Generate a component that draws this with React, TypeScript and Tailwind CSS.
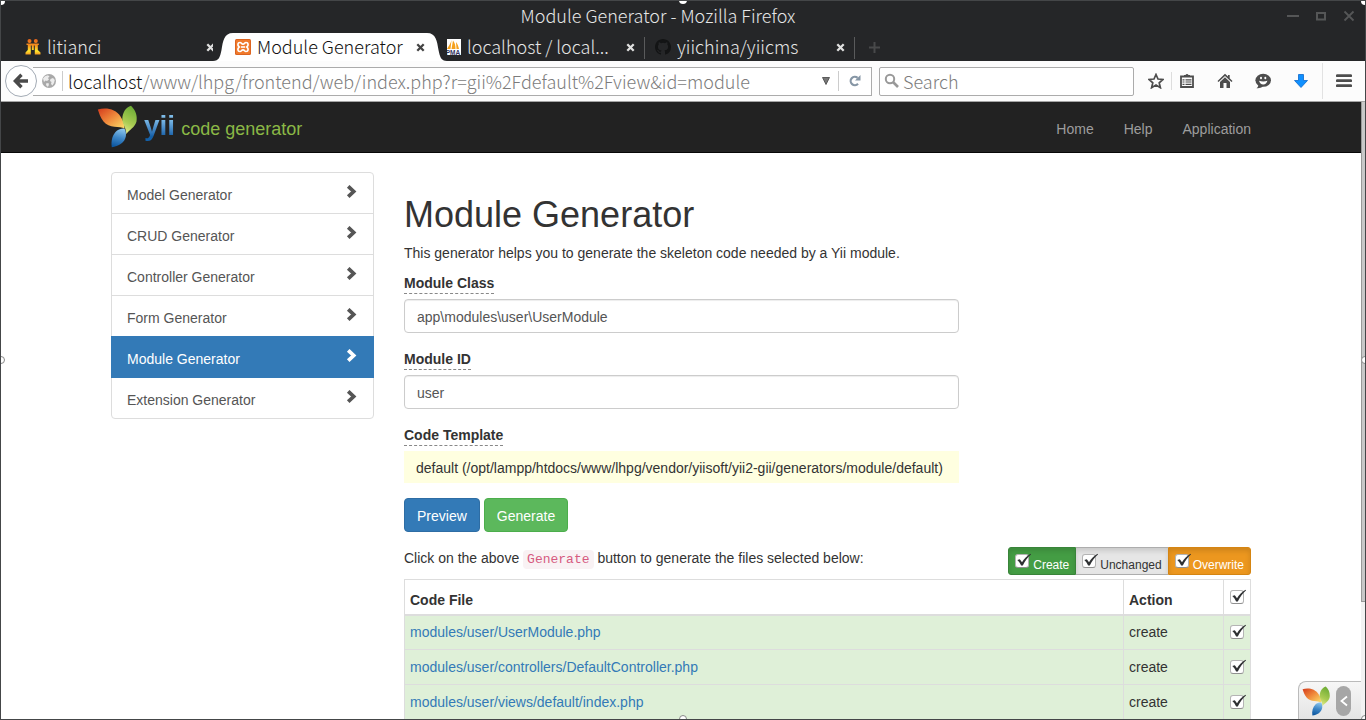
import type { ReactNode } from 'react';

const chromeFont = "font-['Noto_Sans_CJK_SC','Noto_Sans',sans-serif]";
const pageFont = "font-['Liberation_Sans',Arial,sans-serif]";

function Leaves({ className, id }: { className: string; id: string }) {
  return (
    <svg className={className} viewBox="0 0 40 43" aria-hidden="true">
      <defs>
        <linearGradient id={id + 'o'} x1="0" y1="0" x2="1" y2="1">
          <stop offset="0" stopColor="#d43a1c" />
          <stop offset="0.5" stopColor="#f08a3c" />
          <stop offset="1" stopColor="#fbe06a" />
        </linearGradient>
        <linearGradient id={id + 'g'} x1="0.6" y1="0" x2="0.3" y2="1">
          <stop offset="0" stopColor="#6cab35" />
          <stop offset="0.6" stopColor="#a9cb52" />
          <stop offset="1" stopColor="#e3ec8c" />
        </linearGradient>
        <linearGradient id={id + 'b'} x1="0.6" y1="0" x2="0.4" y2="1">
          <stop offset="0" stopColor="#8cc6ee" />
          <stop offset="0.5" stopColor="#3d86c6" />
          <stop offset="1" stopColor="#0d57a0" />
        </linearGradient>
      </defs>
      <path fill={`url(#${id}o)`} d="M.8 4.500C9 2 19 4 23.500 11.500C26.500 16 27.500 19 27.500 23.500C23 21 12 23.500 6.500 16.500C3 12 2.200 8 .8 4.500Z" />
      <path fill={`url(#${id}g)`} d="M34 .8C38.500 5 40.500 10.500 39.500 16.500C38 22.500 32.500 24.500 29.300 29C29.300 23 25.500 19.500 25.300 14C25.600 7 29 2.500 34 .8Z" />
      <path fill={`url(#${id}b)`} d="M27.300 23.500C28.800 25.500 29.200 28 28.900 31C28 37.500 21.500 41.500 14.800 42.200C13.800 36 15.500 29.500 19.500 26C21.500 24.200 24.500 23.300 27.300 23.500Z" />
    </svg>
  );
}

function CloseMark({ className }: { className: string }) {
  return (
    <svg className={className} viewBox="0 0 9 9" aria-hidden="true">
      <path d="M1.300 1.300L7.700 7.700M7.700 1.300L1.300 7.700" stroke="currentColor" strokeWidth="2.300" />
    </svg>
  );
}

function Tab({ icon, title, active, divider }: { icon: ReactNode; title: string; active?: boolean; divider?: boolean }) {
  return (
    <div className={active ? 'relative z-10 flex h-7 w-[210px] items-center bg-white text-[#111]' : 'relative flex h-7 w-[210px] items-center text-[#e6e6e6]'}>
      {active && (
        <>
          <svg className="absolute -left-3 top-0 h-7 w-6" viewBox="0 0 24 28" aria-hidden="true">
            <path d="M0 0H24V28H0Z" fill="#252628" />
            <path d="M0 28C6 28 7 24 8.500 17C10 8 11 0 20 0H24V28Z" fill="#fff" />
          </svg>
          <svg className="absolute -right-3 top-0 h-7 w-6" viewBox="0 0 24 28" aria-hidden="true">
            <path d="M0 0H24V28H0Z" fill="#252628" />
            <path d="M24 28C18 28 17 24 15.500 17C14 8 13 0 4 0H0V28Z" fill="#fff" />
          </svg>
        </>
      )}
      <div className="relative flex w-full items-center px-2.5">
        {icon}
        <span className="ml-1.5 flex-1 whitespace-nowrap pb-0.5 text-[18px] leading-[26px]">{title}</span>
        <button type="button" aria-label={'Close ' + title} className="shrink-0">
          <CloseMark className={active ? 'h-[9px] w-[9px] text-[#444]' : 'h-[9px] w-[9px] text-[#e0e0e0]'} />
        </button>
      </div>
      {divider && <span className="absolute right-0 top-1 h-[22px] w-px bg-[#5a5b5c]" />}
    </div>
  );
}

function Check({ label, id }: { label: string; id: string }) {
  return (
    <span className="relative inline-block h-3.5 w-3.5 align-top">
      <input
        id={id}
        type="checkbox"
        defaultChecked
        aria-label={label}
        className="peer block h-3.5 w-3.5 appearance-none rounded-[3px] border border-[#b4b4b4] border-b-[#909090] bg-white"
      />
      <svg className="pointer-events-none absolute -top-px left-0 hidden h-4 w-4 peer-checked:block" viewBox="0 0 16 16" aria-hidden="true">
        <path d="M2.300 7L4.800 6.200L7 9.200C9 6 12 2.800 15.500 .8L16 1.600C12.700 4.500 9.700 8.500 7.800 12.500H6.100C5.200 10.500 4 8.500 2.300 7Z" fill="#2e3032" />
      </svg>
    </span>
  );
}

const generators = ['Model Generator', 'CRUD Generator', 'Controller Generator', 'Form Generator', 'Module Generator', 'Extension Generator'];
const files = ['modules/user/UserModule.php', 'modules/user/controllers/DefaultController.php', 'modules/user/views/default/index.php'];

function Field({ id, label, value }: { id: string; label: string; value: string }) {
  return (
    <div className="mb-4">
      <label htmlFor={id} className="mb-[5px] inline-block border-b border-dashed border-[#888] align-top text-[14px] font-bold leading-5">
        {label}
      </label>
      <input
        id={id}
        type="text"
        defaultValue={value}
        className="block h-[34px] w-full rounded border border-[#ccc] bg-white px-3 pt-2 pb-1.5 text-[14px] leading-5 text-[#555] shadow-[inset_0_1px_1px_rgba(0,0,0,0.075)]"
      />
    </div>
  );
}

function BrowserChrome() {
  return (
    <header className={`shrink-0 bg-[#252628] font-light ${chromeFont}`}>
      <div className="relative flex h-8 items-start justify-center pt-0.5 pr-[50px]">
        <div className="text-[18px] leading-6 text-[#e6e6e6]">Module Generator - Mozilla Firefox</div>
        <div className="absolute right-2.5 top-[9px] flex items-center gap-4 text-[#555657]">
          <button type="button" aria-label="Minimize">
            <svg className="block h-3 w-3" viewBox="0 0 12 12"><path d="M0 6H12" stroke="currentColor" strokeWidth="2" /></svg>
          </button>
          <button type="button" aria-label="Maximize">
            <svg className="block h-3 w-3" viewBox="0 0 12 12"><path d="M2 3H10V9.500H2Z" fill="none" stroke="currentColor" strokeWidth="2" /></svg>
          </button>
          <button type="button" aria-label="Close">
            <svg className="block h-3 w-3" viewBox="0 0 12 12"><path d="M1.500 1.500L10.500 10.500M10.500 1.500L1.500 10.500" stroke="currentColor" strokeWidth="1.800" /></svg>
          </button>
        </div>
      </div>
      <div className="flex h-7 pl-3.5">
        <Tab
          title="litianci"
          icon={
            <svg className="h-4 w-4 shrink-0" viewBox="0 0 16 16" aria-hidden="true">
              <defs>
                <linearGradient id="people" x1="0" y1="0" x2="0" y2="16" gradientUnits="userSpaceOnUse">
                  <stop offset="0" stopColor="#e8641b" />
                  <stop offset="0.4" stopColor="#f5901e" />
                  <stop offset="0.75" stopColor="#ffe92e" />
                  <stop offset="1" stopColor="#f08a1e" />
                </linearGradient>
              </defs>
              <g fill="url(#people)">
                <circle cx="4.500" cy="2" r="2" />
                <circle cx="10.800" cy="2" r="2" />
                <path d="M1.500 4.500H13.800V6H12.800V11L15.500 13.500V15.500H9.800V6.500H8.800V11H6.800V6.500H5.800V15.500H.5V13.500L2.800 11V6H1.500Z" />
              </g>
            </svg>
          }
        />
        <Tab
          active
          title="Module Generator"
          icon={
            <svg className="h-4 w-4 shrink-0" viewBox="0 0 16 16" aria-hidden="true">
              <rect width="16" height="16" rx="1.500" fill="#dd6420" />
              <rect x="1" y="1" width="14" height="14" rx="1" fill="#f07a2c" />
              <path d="M5 3.500C2.500 3.500 2.200 6.500 4.200 8C2.200 9.500 2.500 12.500 5 12.500C6.500 12.500 6.300 10.800 8 10.800S9.500 12.500 11 12.500C13.500 12.500 13.800 9.500 11.800 8C13.800 6.500 13.500 3.500 11 3.500C9.500 3.500 9.700 5.200 8 5.200S6.500 3.500 5 3.500Z" fill="none" stroke="#fff" strokeWidth="1.700" />
              <path d="M6 8H10" stroke="#fff" strokeWidth="1.600" />
            </svg>
          }
        />
        <Tab
          divider
          title="localhost / local..."
          icon={
            <svg className="h-4 w-4 shrink-0" viewBox="0 0 16 16" aria-hidden="true">
              <rect width="16" height="16" fill="#fff" />
              <path d="M6.500 1L5.500 10H2C3.500 7.500 5.500 5 6.500 1ZM8 1.500C10 4 10.500 7 10.500 10H6.500ZM11 3C12.500 5 13.500 7.500 14 10H11.500Z" fill="#f6a11c" />
              <text x="8" y="15.600" textAnchor="middle" fontSize="6.500" fontWeight="bold" fill="#33335f" fontFamily="Liberation Sans, sans-serif">PMA</text>
            </svg>
          }
        />
        <Tab
          divider
          title="yiichina/yiicms"
          icon={
            <svg className="h-4 w-4 shrink-0" viewBox="0 0 16 16" aria-hidden="true">
              <path fill="#131415" d="M8 0C3.580 0 0 3.580 0 8c0 3.540 2.290 6.530 5.470 7.590.4.070.55-.17.55-.38 0-.19-.01-.82-.01-1.490-2.010.37-2.530-.49-2.690-.94-.09-.23-.48-.94-.82-1.130-.28-.15-.68-.52-.01-.53.63-.01 1.080.58 1.230.82.72 1.210 1.870.87 2.330.66.07-.52.28-.87.51-1.070-1.780-.2-3.640-.89-3.640-3.950 0-.87.31-1.590.82-2.150-.08-.2-.36-1.020.08-2.120 0 0 .67-.21 2.200.82a7.600 7.600 0 0 1 4 0c1.530-1.040 2.200-.82 2.200-.82.44 1.100.16 1.920.08 2.120.51.56.82 1.270.82 2.150 0 3.070-1.870 3.750-3.650 3.950.29.25.54.73.54 1.480 0 1.070-.01 1.930-.01 2.200 0 .21.15.46.55.38A8 8 0 0 0 16 8c0-4.420-3.580-8-8-8Z" />
            </svg>
          }
        />
        <button type="button" aria-label="New tab" className="ml-3.5 text-[#48494a]">
          <svg className="block h-[11px] w-[11px]" viewBox="0 0 11 11"><path d="M5.500 0V11M0 5.500H11" stroke="currentColor" strokeWidth="2" /></svg>
        </button>
      </div>
      <div className="flex h-[41px] items-center border-b border-[#a5a5a5] bg-[#fcfcfc] pl-1 pr-[13px]">
        <button type="button" aria-label="Back" className="relative z-10 flex h-8 w-8 shrink-0 items-center justify-center rounded-full border border-[#a3abb5] bg-white">
          <svg className="h-4 w-4" viewBox="0 0 16 16"><path d="M8.500 1.800L2.300 8L8.500 14.200M3 8H15" fill="none" stroke="#4a4a4a" strokeWidth="3.400" /></svg>
        </button>
        <div className="-ml-1 flex h-[29px] min-w-0 flex-1 items-center border border-l-0 border-[#ababab] bg-white pl-[9px]">
          <svg className="h-3.5 w-3.5 shrink-0" viewBox="0 0 14 14" aria-hidden="true">
            <circle cx="7" cy="7" r="7" fill="#a9a9a9" />
            <path d="M1 4.500L3 2.200L6 1.200L7.500 2.500L6 4L7 5.500L5 7L3.500 6.500L2 8ZM8.500 5L11 4L12.800 6L12 9L10.500 11.500L9 10L9.500 8L8 7ZM4.500 9L7 9.500L6.500 12L5.500 12.800L4 11Z" fill="#ececec" />
          </svg>
          <span className="ml-1.5 h-5 w-px shrink-0 bg-[#ccc]" />
          <div className="ml-[5px] min-w-0 flex-1 whitespace-nowrap text-[18px] leading-6 text-[#7c7c7c]">
            <span className="text-[#111]">localhost</span>/www/lhpg/frontend/web/index.php?r=gii%2Fdefault%2Fview&amp;id=module
          </div>
          <button type="button" aria-label="Show history" className="shrink-0">
            <svg className="block h-2 w-2" viewBox="0 0 8 8"><path d="M.5 .5H7.500L4 7.500Z" fill="#777" stroke="#444" strokeWidth="0.800" /></svg>
          </button>
          <span className="ml-2 h-5 w-px shrink-0 bg-[#ccc]" />
          <button type="button" aria-label="Reload" className="mx-2.5 shrink-0">
            <svg className="block h-3 w-3" viewBox="0 0 12 12">
              <path d="M9 8.800A4.200 4.200 0 1 1 8.600 2.800" fill="none" stroke="#8696a5" strokeWidth="2.200" />
              <path d="M11.500 0V5.500H6Z" fill="#8696a5" />
            </svg>
          </button>
        </div>
        <label className="ml-[7px] flex h-[29px] w-[255px] items-center rounded-xs border border-[#ababab] bg-white pl-1">
          <svg className="h-4 w-4 shrink-0" viewBox="0 0 16 16" aria-hidden="true">
            <circle cx="6" cy="6" r="4.200" fill="none" stroke="#999" strokeWidth="2" />
            <path d="M9 9L14 14" stroke="#999" strokeWidth="2.600" />
          </svg>
          <input type="search" aria-label="Search" placeholder="Search" className="ml-[3px] w-full min-w-0 bg-transparent text-[18px] leading-6 placeholder:text-[#7c7c7c]" />
        </label>
        <div className="flex shrink-0 items-center text-[#4d4d4d]">
          <button type="button" aria-label="Bookmark this page" className="ml-3.5">
            <svg className="block h-4 w-4" viewBox="0 0 16 16"><path d="M8 1.500L10 6L15 6.500L11.200 9.800L12.400 14.700L8 12.100L3.600 14.700L4.800 9.800L1 6.500L6 6Z" fill="none" stroke="currentColor" strokeWidth="1.700" /></svg>
          </button>
          <span className="ml-[7px] h-[18px] w-px bg-[#ddd]" />
          <button type="button" aria-label="Bookmarks" className="ml-[7px]">
            <svg className="block h-4 w-4" viewBox="0 0 16 16">
              <path d="M2 3.500H14V14H2Z" fill="none" stroke="currentColor" strokeWidth="1.800" />
              <path d="M5 4V2H6.500A1.700 1.700 0 0 1 9.500 2H11V4Z" fill="currentColor" />
              <path d="M3.500 6.800H5.500M6.500 6.800H12.500M3.500 9H5.500M6.500 9H12.500M3.500 11.300H5.500M6.500 11.300H12.500" stroke="currentColor" strokeWidth="1.200" />
            </svg>
          </button>
          <button type="button" aria-label="Home page" className="ml-[22px]">
            <svg className="block h-4 w-4" viewBox="0 0 16 16">
              <path d="M8 .8L.5 8L1.500 9L8 3L14.500 9L15.500 8L12.700 5.200V2H11V3.600Z" fill="currentColor" />
              <path d="M8 4.300L3 9V15H6.500V10H9.500V15H13V9Z" fill="currentColor" />
            </svg>
          </button>
          <button type="button" aria-label="Start a conversation" className="ml-[22px]">
            <svg className="block h-4 w-4" viewBox="0 0 16 16">
              <ellipse cx="8.200" cy="7.300" rx="7.800" ry="6.500" fill="currentColor" />
              <path d="M1.500 15.200C3.500 14 3.500 12 3 11L8 13.300C6 15 4 15.500 1.500 15.200Z" fill="currentColor" />
              <path d="M4 7.800Q8.200 9.300 12.400 7.800Q11.500 11.500 8.200 11.500Q5 11.500 4 7.800Z" fill="#fff" />
              <ellipse cx="6" cy="5" rx="1" ry="1.300" fill="#fff" />
              <ellipse cx="10.300" cy="5" rx="1" ry="1.300" fill="#fff" />
            </svg>
          </button>
          <button type="button" aria-label="Downloads" className="ml-[22px]">
            <svg className="block h-4 w-4" viewBox="0 0 16 16"><path d="M5.500 1.500H10.500V7.500H14.500L8 14.500L1.500 7.500H5.500Z" fill="#0f90ff" stroke="#0b68cc" strokeWidth="0.800" /></svg>
          </button>
          <span className="ml-[13px] h-9 w-px bg-[#e2e2e2]" />
          <button type="button" aria-label="Open menu" className="ml-[13px]">
            <svg className="block h-4 w-4" viewBox="0 0 16 16"><path d="M1.200 2.700H14.800M1.200 7.700H14.800M1.200 12.700H14.800" stroke="currentColor" strokeWidth="2.700" strokeLinecap="round" /></svg>
          </button>
        </div>
      </div>
    </header>
  );
}

export default function App() {
  return (
    <div className="relative flex h-screen flex-col overflow-hidden border border-[#444648] bg-white">
      <BrowserChrome />
      <div className={`flex min-h-0 flex-1 ${pageFont} text-[14px] leading-5 text-[#333]`}>
        <div className="relative min-w-0 flex-1 overflow-hidden">
          <nav className="border-b border-[#080808] bg-[#222]">
            <div className="mx-auto flex h-[50px] max-w-[1170px] items-center justify-between pr-[15px]">
              <a href="#yii" className="flex h-full items-center">
                <Leaves id="brand" className="mb-0.5 h-[43px] w-[42px]" />
                <span className="ml-1.5 bg-linear-to-b from-[#7dbbe8] from-30% to-[#1360a8] to-75% bg-clip-text pb-0.5 text-[28px] font-bold leading-9 text-transparent">yii</span>
                <span className="ml-1.5 pt-1 text-[18px] leading-6 text-[#8bb846]">code generator</span>
              </a>
              <div className="flex gap-[30px] pt-1 text-[#9d9d9d]">
                <a href="#home">Home</a>
                <a href="#help">Help</a>
                <a href="#application">Application</a>
              </div>
            </div>
          </nav>
          <div className="mx-auto flex max-w-[1170px] items-start gap-[30px] px-[15px] pt-[19px]">
            <aside className="w-[263px] shrink-0 rounded border border-[#ddd]">
              {generators.map((name) => (
                <a
                  key={name}
                  href={'#' + name.split(' ')[0].toLowerCase()}
                  className={
                    name === 'Module Generator'
                      ? '-mx-px -mt-px flex h-[42px] justify-between border border-[#337ab7] bg-[#337ab7] px-[15px] py-2.5 text-white'
                      : 'flex h-[41px] justify-between border-b border-[#ddd] px-[15px] py-2.5 text-[#555] last:h-10 last:border-b-0'
                  }
                >
                  <span className="pt-0.5">{name}</span>
                  <svg className="mt-0.5 h-3.5 w-3.5" viewBox="0 0 14 14" aria-hidden="true">
                    <path d="M4.200 1.300L9.700 6.500L4.200 11.700" fill="none" stroke="currentColor" strokeWidth="3.700" />
                  </svg>
                </a>
              ))}
            </aside>
            <main className="min-w-0 flex-1 pt-[23px]">
              <h1 className="mb-2 text-[36px] leading-10">Module Generator</h1>
              <p className="mb-2.5">This generator helps you to generate the skeleton code needed by a Yii module.</p>
              <form onSubmit={(e) => e.preventDefault()}>
                <div className="max-w-[555px]">
                  <Field id="module-class" label="Module Class" value="app\modules\user\UserModule" />
                  <Field id="module-id" label="Module ID" value="user" />
                  <div className="mb-[15px]">
                    <div className="mb-[5px] inline-block border-b border-dashed border-[#888] align-top font-bold">Code Template</div>
                    <div className="h-8 whitespace-nowrap bg-[#ffffe0] px-3 pt-[7px] pb-[5px]">
                      default (/opt/lampp/htdocs/www/lhpg/vendor/yiisoft/yii2-gii/generators/module/default)
                    </div>
                  </div>
                </div>
                <div className="mb-[15px] flex gap-1 text-white">
                  <button type="submit" className="h-[34px] rounded border border-[#2e6da4] bg-[#337ab7] px-3 pt-0.5">Preview</button>
                  <button type="submit" className="h-[34px] rounded border border-[#4cae4c] bg-[#5cb85c] px-3 pt-0.5">Generate</button>
                </div>
                <div className="mb-1 flex items-start justify-between">
                  <p className="pt-px">
                    Click on the above{' '}
                    <code className="rounded bg-[#f9f2f4] px-1 py-0.5 font-['Liberation_Mono',monospace] text-[13px] text-[#d65a80]">Generate</code>{' '}
                    button to generate the files selected below:
                  </p>
                  <div className="flex text-[12px] leading-[18px]">
                    <label className="flex h-7 items-start gap-1 rounded-l-[3px] border border-[#398439] bg-[#449d44] px-1.5 pt-1.5 text-white shadow-[inset_0_3px_5px_rgba(0,0,0,0.125)]">
                      <Check id="create" label="Create" />
                      <span className="pt-0.5">Create</span>
                    </label>
                    <label className="flex h-7 items-start gap-1 border-y border-[#adadad] bg-[#e6e6e6] px-1.5 pt-1.5 shadow-[inset_0_3px_5px_rgba(0,0,0,0.125)]">
                      <Check id="unchanged" label="Unchanged" />
                      <span className="pt-0.5">Unchanged</span>
                    </label>
                    <label className="flex h-7 items-start gap-1 rounded-r-[3px] border border-[#d58512] bg-[#ec971f] px-1.5 pt-1.5 text-white shadow-[inset_0_3px_5px_rgba(0,0,0,0.125)]">
                      <Check id="overwrite" label="Overwrite" />
                      <span className="pt-0.5">Overwrite</span>
                    </label>
                  </div>
                </div>
                <table className="w-full border-collapse border border-[#ddd]">
                  <thead>
                    <tr className="h-[35px] border-b-2 border-[#ddd]">
                      <th className="px-[5px] pt-1.5 text-left">Code File</th>
                      <th className="w-[100px] border-l border-[#ddd] px-[5px] pt-1.5 text-left">Action</th>
                      <th className="w-[27px] border-l border-[#ddd] pl-1.5 text-left leading-[14px]"><Check id="all" label="Select all files" /></th>
                    </tr>
                  </thead>
                  <tbody>
                    {files.map((file) => (
                      <tr key={file} className="h-[35px] border-b border-[#ddd] bg-[#dff0d8]">
                        <td className="px-[5px]"><a href={'#' + file} className="text-[#337ab7]">{file}</a></td>
                        <td className="border-l border-[#ddd] px-[5px]">create</td>
                        <td className="border-l border-[#ddd] pl-1.5 leading-[14px]"><Check id={file} label={file} /></td>
                      </tr>
                    ))}
                  </tbody>
                </table>
              </form>
            </main>
          </div>
          <div className="absolute bottom-0 right-0 flex h-[38px] w-[63px] items-center gap-1.5 rounded-tl-lg border-l border-t border-[#bbb] bg-linear-to-b from-[#f7f7f7] to-[#e4e4e4] pl-[3px]">
            <Leaves id="toolbar" className="h-[30px] w-7" />
            <button type="button" aria-label="Toggle debug toolbar" className="flex h-[30px] w-[15px] items-center justify-center rounded-full bg-[#a6a6a6]">
              <svg className="h-3 w-2" viewBox="0 0 8 12"><path d="M7 1.500L1.500 6L7 10.500" fill="none" stroke="#fff" strokeWidth="1.800" /></svg>
            </button>
          </div>
        </div>
        <div className="w-1 shrink-0 bg-[#f2f2f2]">
          <div className="h-[81%] border-l border-b border-[#999] bg-[#c8c8c8]" />
        </div>
      </div>
      <span className="absolute -left-1 -top-1 h-2 w-2 rounded-full bg-white" />
      <span className="absolute -right-1 -top-1 h-2 w-2 rounded-full bg-white" />
      <span className="absolute -top-[5px] left-1/2 -ml-1 h-2 w-2 rounded-full bg-white" />
      <span className="absolute -left-1 top-1/2 -mt-1 h-2 w-2 rounded-full border border-[#888] bg-white" />
      <span className="absolute -right-1 top-1/2 -mt-1 h-2 w-2 rounded-full border border-[#888] bg-white" />
      <span className="absolute -bottom-1 left-1/2 -ml-1 h-2 w-2 rounded-full border border-[#888] bg-white" />
      <span className="absolute -bottom-1 -right-1 h-2 w-2 rounded-full border border-[#888] bg-white" />
    </div>
  );
}
